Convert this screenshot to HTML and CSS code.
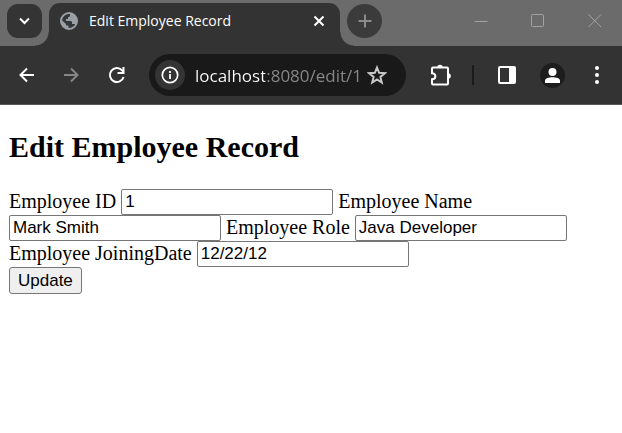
FILE: index.html
```html
<!DOCTYPE html>
<html lang="en">
<head>
<meta charset="utf-8">
<title>Edit Employee Record</title>
<link rel="stylesheet" href="styles.css">
</head>
<body>
<header class="browser">
  <div class="tab-strip">
    <button class="tab-search" type="button" aria-label="Search tabs">
      <svg width="35" height="34" viewBox="0 0 35 34"><path d="M13 14.500l4.500 4.500 4.500-4.500" fill="none" stroke="#fff" stroke-width="2"/></svg>
    </button>
    <div class="tab">
      <svg class="globe" width="18" height="18" viewBox="0 0 18 18"><circle cx="9" cy="9" r="8" fill="#353637" stroke="#9aa0a6" stroke-width="2"/><path d="M10 1v2.500c0 1-1 1.500-2 1.500v2H6v2h4.500c1 0 1.500.7 1.500 1.500V12h2c1 0 1.500.6 1.500 1.500A8 8 0 0 0 10 1zM1 7.500l5 4.500v1.500h2.500V17A8 8 0 0 1 1 7.500z" fill="#9aa0a6"/></svg>
      <span class="tab-title">Edit Employee Record</span>
      <button class="tab-close" type="button" aria-label="Close tab">
        <svg width="12" height="12" viewBox="0 0 12 12"><path d="M1.500 1.500l9 9M10.500 1.500l-9 9" stroke="#fff" stroke-width="2"/></svg>
      </button>
    </div>
    <button class="new-tab" type="button" aria-label="New tab">
      <svg width="14" height="14" viewBox="0 0 14 14"><path d="M7 .5v13M.5 7h13" stroke="#8b8b8b" stroke-width="2"/></svg>
    </button>
    <div class="window-buttons">
      <button type="button" aria-label="Minimize"><svg width="14" height="14" viewBox="0 0 14 14"><path d="M.5 7.500h13" stroke="#a2a2a2"/></svg></button>
      <button type="button" aria-label="Maximize"><svg width="14" height="14" viewBox="0 0 14 14"><rect x=".5" y=".5" width="12" height="12" rx="1" fill="none" stroke="#a2a2a2"/></svg></button>
      <button type="button" aria-label="Close"><svg width="14" height="14" viewBox="0 0 14 14"><path d="M.5 .5l12.500 12.500M13 .5L.5 13" stroke="#a2a2a2"/></svg></button>
    </div>
  </div>
  <div class="toolbar">
    <div class="nav">
      <button type="button" aria-label="Back"><svg width="18" height="18" viewBox="0 0 18 18"><path d="M16 9H3M9 2.500L2.500 9 9 15.500" fill="none" stroke="#fff" stroke-width="2"/></svg></button>
      <button type="button" aria-label="Forward"><svg width="18" height="18" viewBox="0 0 18 18"><path d="M1 9h13M8 2.500L14.500 9 8 15.500" fill="none" stroke="#868686" stroke-width="2"/></svg></button>
      <button type="button" aria-label="Reload"><svg width="18" height="18" viewBox="0 0 18 18"><path d="M15.600 11A7 7 0 1 1 14 4.200L15.500 6" fill="none" stroke="#fff" stroke-width="2"/><path d="M16.500 1v7h-7V6h5V1z" fill="#fff"/></svg></button>
    </div>
    <div class="address">
      <button class="site-info" type="button" aria-label="Site information">
        <svg width="18" height="18" viewBox="0 0 18 18"><circle cx="9" cy="9" r="7.700" fill="none" stroke="#fff" stroke-width="1.700"/><path d="M9 8v5M9 5v2" stroke="#fff" stroke-width="1.800"/></svg>
      </button>
      <input class="url" type="text" aria-label="Address" value="localhost:8080/edit/1">
      <button class="bookmark" type="button" aria-label="Bookmark">
        <svg width="20" height="20" viewBox="0 0 20 20"><path d="M10 2.500l2.100 5.300 5.700.4-4.400 3.700 1.400 5.600L10 14.400l-4.800 3.100 1.400-5.600-4.400-3.700 5.700-.4z" fill="none" stroke="#c7c7c7" stroke-width="2"/></svg>
      </button>
    </div>
    <div class="tools">
      <button type="button" aria-label="Extensions"><svg width="22" height="22" viewBox="0 0 22 22"><path d="M3 4.500q0-1 1-1h14q1 0 1 1v15q0 1-1 1H4q-1 0-1-1v-4.200c4.500 0 4.500-6 0-6z" fill="none" stroke="#fff" stroke-width="2"/><path d="M8.200 3.500a2.800 2.800 0 0 1 5.600 0zM19 9.200a2.800 2.800 0 0 1 0 5.600z" fill="#fff"/></svg></button>
      <span class="divider"></span>
      <button type="button" aria-label="Side panel"><svg width="20" height="20" viewBox="0 0 20 20"><rect x="2" y="2" width="16" height="16" rx="1" fill="none" stroke="#fff" stroke-width="2"/><path d="M12 2h6v16h-6z" fill="#fff"/></svg></button>
      <button class="profile" type="button" aria-label="Profile"><svg width="25" height="25" viewBox="0 0 25 25"><circle cx="12.500" cy="9" r="4" fill="#fff"/><path d="M5 20v-2.500c0-4.500 15-4.500 15 0V20z" fill="#fff"/></svg></button>
      <button type="button" aria-label="Menu"><svg width="6" height="18" viewBox="0 0 6 18"><circle cx="3" cy="2" r="2" fill="#fff"/><circle cx="3" cy="9" r="2" fill="#fff"/><circle cx="3" cy="16" r="2" fill="#fff"/></svg></button>
    </div>
  </div>
</header>
<main class="page">
  <h1>Edit Employee Record</h1>
  <form>
    <label for="emp-id">Employee ID</label>
    <input id="emp-id" type="text" value="1">
    <label for="emp-name">Employee Name</label>
    <input id="emp-name" type="text" value="Mark Smith">
    <label for="emp-role">Employee Role</label>
    <input id="emp-role" type="text" value="Java Developer">
    <label for="emp-date">Employee JoiningDate</label>
    <input id="emp-date" type="text" value="12/22/12">
    <div class="actions"><button type="submit">Update</button></div>
  </form>
</main>
</body>
</html>
```
FILE: styles.css
```css
* { box-sizing: border-box; }

body {
  margin: 0;
  background: #fff;
  color: #000;
  font-family: "Liberation Serif", serif;
}

svg { display: block; }

.browser {
  font-family: "Open Sans", "Noto Sans", sans-serif;
  border-bottom: 1px solid #5a5a5a;
}

.browser button {
  display: flex;
  align-items: center;
  justify-content: center;
  flex: none;
  padding: 0;
  border: 0;
  background: none;
}

.tab-strip {
  display: flex;
  height: 46px;
  padding: 3px 0 0 7px;
  background: #6b6b6b;
}

.browser .tab-search {
  width: 35px;
  height: 34px;
  margin: 1px 7px 0 0;
  border-radius: 11px;
  background: #343434;
}

.tab {
  position: relative;
  display: flex;
  align-items: center;
  flex: 0 1 291px;
  min-width: 0;
  padding: 0 15px 7px 11px;
  border-radius: 11px 11px 0 0;
  background: #333;
}

/* Flared feet where the tab meets the toolbar */
.tab::before,
.tab::after {
  content: "";
  position: absolute;
  bottom: 0;
  width: 14px;
  height: 14px;
}

.tab::before {
  right: 100%;
  background: radial-gradient(circle at 0 0, transparent 13px, #333 14px);
}

.tab::after {
  left: 100%;
  background: radial-gradient(circle at 100% 0, transparent 13px, #333 14px);
}

.globe { flex: none; }

.tab-title {
  flex: 1;
  min-width: 0;
  margin-left: 11px;
  overflow: hidden;
  color: #fff;
  font-size: 14px;
  line-height: 20px;
  white-space: nowrap;
}

.browser .new-tab {
  width: 35px;
  height: 34px;
  margin: 1px 0 0 7px;
  border-radius: 50%;
  background: #3b3b3b;
}

.window-buttons {
  display: flex;
  gap: 43px;
  margin: 0 20px 8px auto;
}

.toolbar {
  display: flex;
  align-items: center;
  height: 58px;
  padding: 0 22px 0 18px;
  background: #333;
}

.nav {
  display: flex;
  gap: 27px;
  margin-right: 23px;
}

.address {
  display: flex;
  align-items: center;
  flex: 1;
  min-width: 0;
  height: 42px;
  padding: 0 19px 0 6px;
  border-radius: 21px;
  background: #191919;
}

.browser .site-info {
  width: 30px;
  height: 30px;
  border-radius: 50%;
  background: #343434;
}

/* The host is bright, the port and path are dimmed */
.url {
  flex: 1;
  min-width: 0;
  height: 28px;
  margin-left: 10px;
  padding: 0;
  border: 0;
  background: linear-gradient(90deg, #fff 70px, #898989 70px);
  background-clip: text;
  color: transparent;
  font-family: inherit;
  font-size: 17px;
}

.tools {
  display: flex;
  align-items: center;
  margin-left: 23px;
}

.divider {
  width: 2px;
  height: 20px;
  margin: 0 23px 0 21px;
  background: #1b1b1b;
}

.browser .profile {
  margin: 0 29px 0 23px;
  border-radius: 50%;
  background: #1d1d1d;
}

.page { padding: 0 9px; }

.page h1 {
  margin: 25px 0;
  font-size: 30px;
  line-height: 34px;
}

.page form {
  font-size: 20px;
  line-height: 24px;
}

.page input {
  width: 212px;
  height: 26px;
  padding: 1px 3px;
  border: 1px solid #767676;
  border-radius: 2px;
  font-family: "Liberation Sans", sans-serif;
  font-size: 17px;
  vertical-align: top;
}

.actions { display: flex; }

.actions button {
  height: 27px;
  padding: 0 8px;
  border: 1px solid #767676;
  border-radius: 3px;
  background: #efefef;
  color: #000;
  font-family: "Liberation Sans", sans-serif;
  font-size: 17px;
}
```
